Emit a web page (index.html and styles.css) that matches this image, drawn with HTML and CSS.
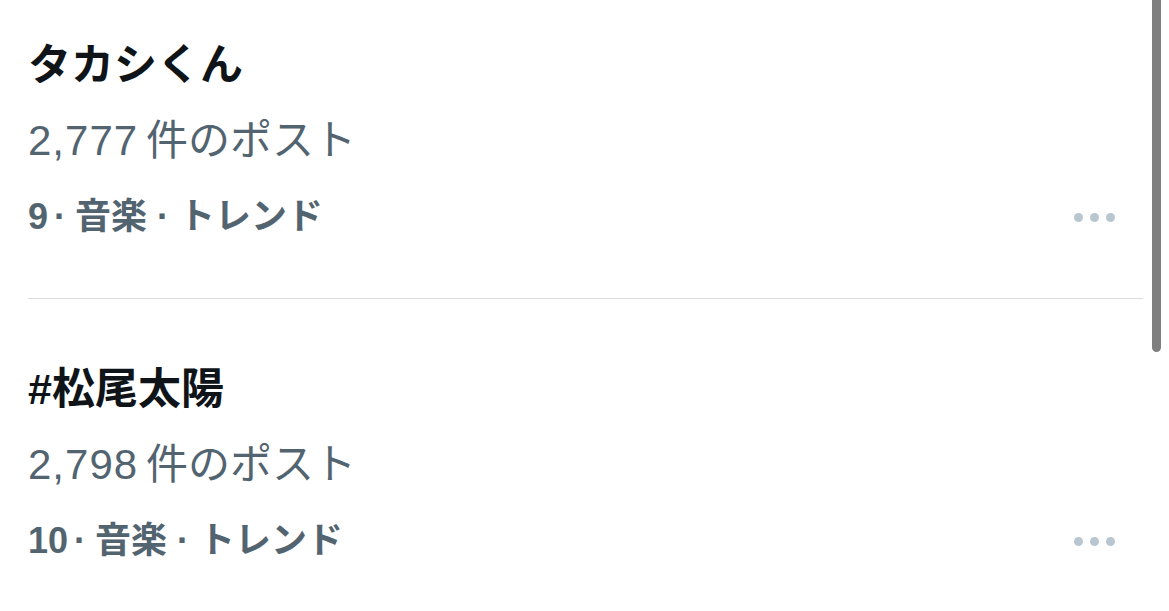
FILE: index.html
```html
<!DOCTYPE html>
<html lang="ja">
<head>
  <meta charset="UTF-8">
  <meta name="viewport" content="width=device-width, initial-scale=1.0">
  <title>トレンド</title>
  <link rel="stylesheet" href="styles.css">
</head>
<body>
  <div class="list">
    <div class="trend">
      <div class="title">タカシくん</div>
      <div class="count"><span class="num">2,777</span><span class="unit">件のポスト</span></div>
      <div class="meta">
        <span>9<span class="sep">·</span>音楽<span class="sep wide">·</span>トレンド</span>
        <span class="more"><i></i><i></i><i></i></span>
      </div>
    </div>
    <div class="trend">
      <div class="title">#松尾太陽</div>
      <div class="count"><span class="num">2,798</span><span class="unit">件のポスト</span></div>
      <div class="meta">
        <span>10<span class="sep">·</span>音楽<span class="sep wide">·</span>トレンド</span>
        <span class="more"><i></i><i></i><i></i></span>
      </div>
    </div>
  </div>
  <div class="scrollbar"></div>
</body>
</html>
```

FILE: styles.css
```css
body {
  margin: 0;
  background: #fff;
  font-family: "Liberation Sans", "Noto Sans CJK JP", sans-serif;
  color: #0f1419;
  overflow: hidden;
}
.list {
  margin: 0 26px 0 28px;
}
.trend {
  padding: 52px 0 45px;
}
.trend:first-child {
  padding-top: 27px;
  padding-bottom: 43px;
  border-bottom: 1px solid #dcdcdc;
}
.title {
  font-size: 43px;
  font-weight: 700;
  line-height: 76px;
}
.count {
  font-size: 42px;
  line-height: 76px;
  color: #536471;
}
.num {
  letter-spacing: 1px;
}
.unit {
  margin-left: 8px;
}
.meta {
  display: flex;
  justify-content: space-between;
  align-items: center;
  padding-right: 28px;
  font-size: 36px;
  font-weight: 700;
  line-height: 76px;
  color: #536471;
}
.sep {
  margin: 0 9px 0 6px;
}
.sep.wide {
  margin: 0 10px;
}
.more {
  display: flex;
  gap: 7px;
}
.more i {
  width: 9px;
  height: 9px;
  border-radius: 50%;
  background: #b9c5cf;
}
.scrollbar {
  position: absolute;
  top: 0;
  left: 1152px;
  width: 9px;
  height: 352px;
  background: #7f7f7f;
  border-radius: 0 0 5px 5px;
}
```
